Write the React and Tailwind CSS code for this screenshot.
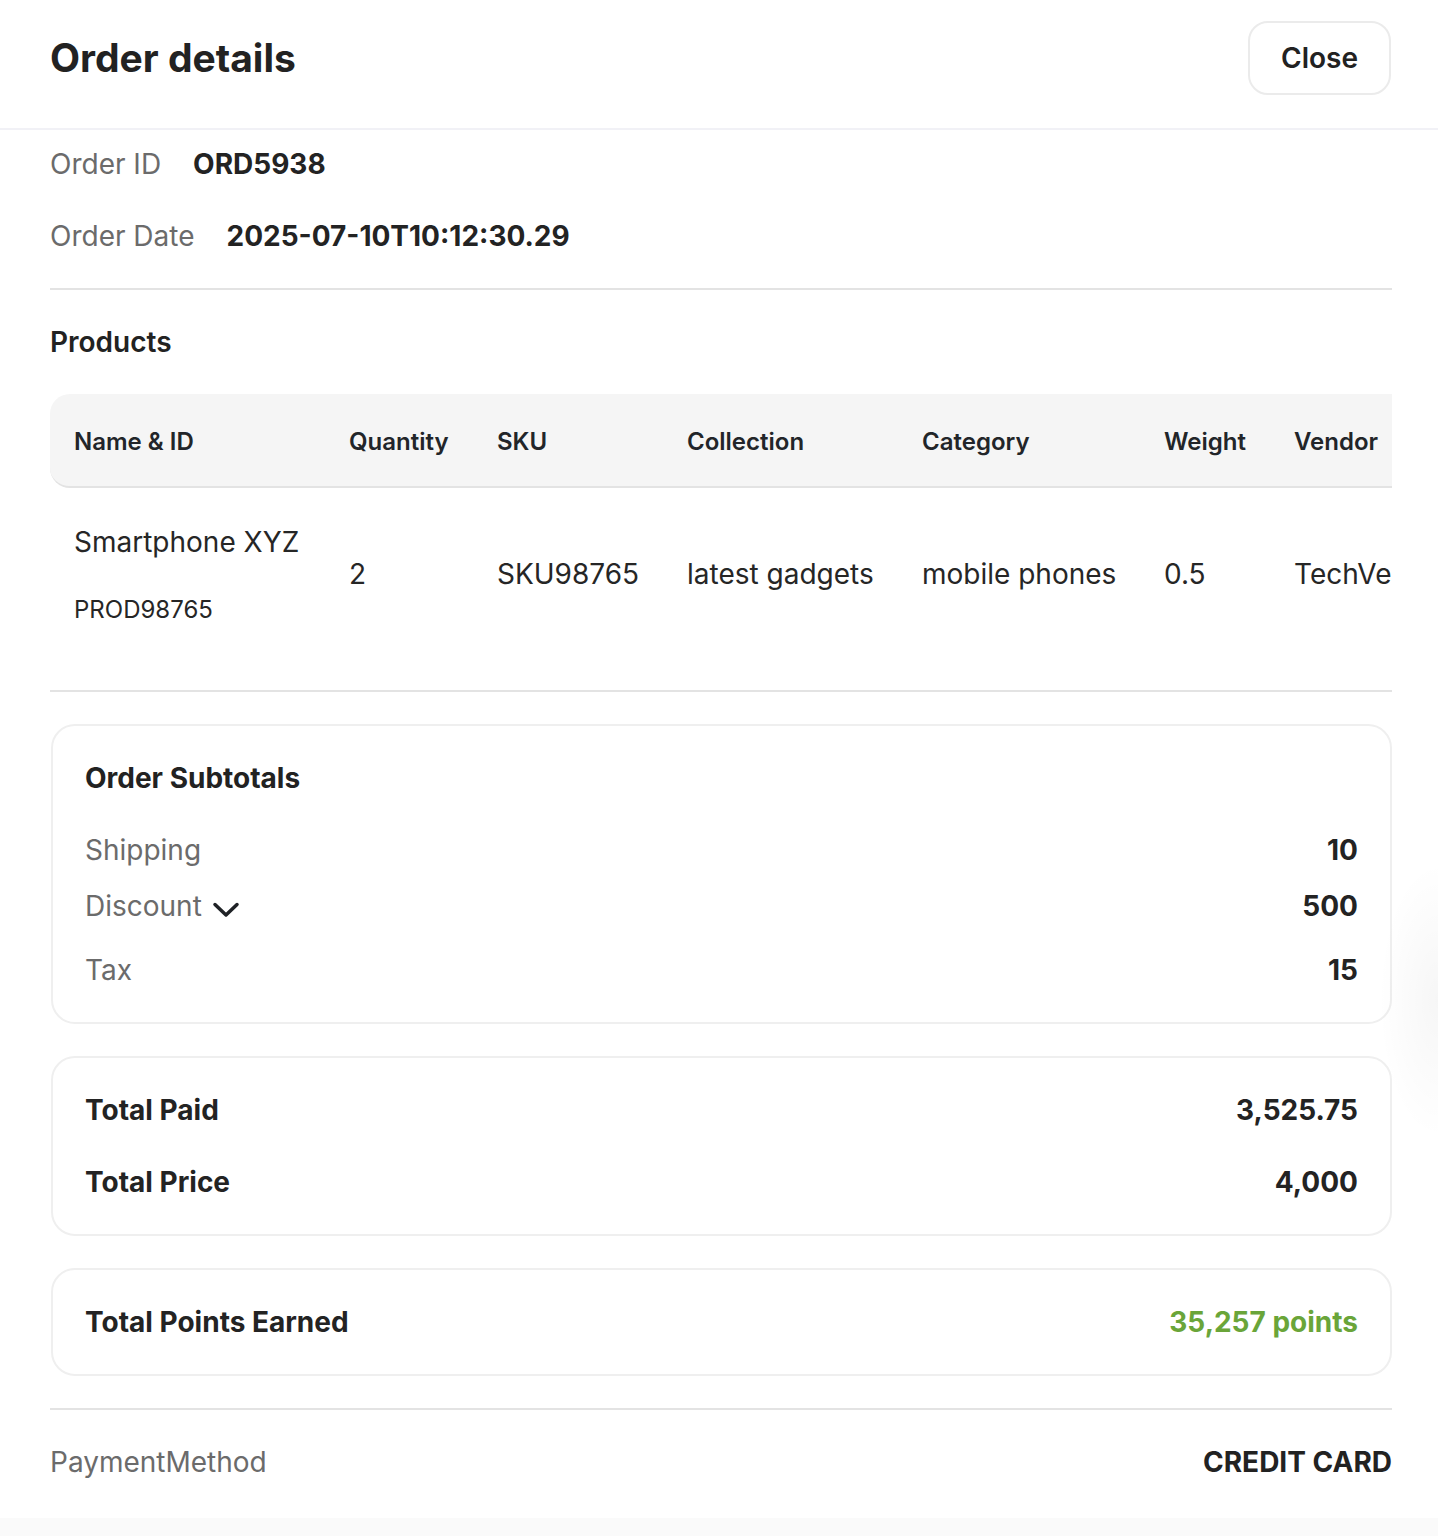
import React from "react";

const columns = [
  { key: "name", label: "Name & ID", width: "w-[275px]" },
  { key: "qty", label: "Quantity", width: "w-[148px]" },
  { key: "sku", label: "SKU", width: "w-[190px]" },
  { key: "collection", label: "Collection", width: "w-[235px]" },
  { key: "category", label: "Category", width: "w-[242px]" },
  { key: "weight", label: "Weight", width: "w-[130px]" },
  { key: "vendor", label: "Vendor", width: "w-[260px]" },
];

const product = {
  name: "Smartphone XYZ",
  id: "PROD98765",
  qty: "2",
  sku: "SKU98765",
  collection: "latest gadgets",
  category: "mobile phones",
  weight: "0.5",
  vendor: "TechVendor Inc.",
};

function ChevronDown() {
  return (
    <svg width="28" height="17" viewBox="0 0 28 17" fill="none" className="ml-[10px] mt-[6px]">
      <path
        d="M3 3.5L14 14L25 3.5"
        stroke="#1f2226"
        strokeWidth="3.5"
        strokeLinecap="round"
        strokeLinejoin="round"
      />
    </svg>
  );
}

function InfoRow({ label, value }) {
  return (
    <div className="flex items-center gap-[32px] h-[40px]">
      <span className="text-[#6b6b6b]">{label}</span>
      <span className="font-bold text-[#232323]">{value}</span>
    </div>
  );
}

export default function App() {
  return (
    <div className="relative min-h-[1536px] bg-[#fafafa] font-['Inter','Noto_Sans',sans-serif] text-[28px] text-[#232323] overflow-hidden">
      <div className="bg-white pb-[36px]">
        {/* Header */}
        <div className="flex items-center justify-between pl-[50px] pr-[47px] pt-[21px] pb-[33px] border-b-2 border-[#f1f1f6]">
          <h1 className="text-[39px] leading-[48px] font-bold text-[#222]">Order details</h1>
          <button className="h-[74px] w-[143px] rounded-[20px] border-2 border-[#ebebeb] bg-white text-[28px] font-semibold text-[#222]">
            Close
          </button>
        </div>

        {/* Body */}
        <div className="pl-[50px] pr-[46px] pt-[14px]">
          <InfoRow label="Order ID" value="ORD5938" />
          <div className="mt-[32px]">
            <InfoRow label="Order Date" value="2025-07-10T10:12:30.29" />
          </div>

          <div className="mt-[32px] h-[2px] bg-[#e3e3e3]" />

          <h2 className="mt-[32px] h-[40px] leading-[40px] font-semibold text-[#222]">Products</h2>

          {/* Products table */}
          <div className="mt-[32px] overflow-hidden">
            <div className="w-max">
              <div className="flex items-center h-[94px] pt-[3px] bg-[#f5f5f5] rounded-l-[20px] border-b-2 border-[#e3e3e3] text-[24px] leading-[32px] font-semibold text-[#222529]">
                {columns.map((c) => (
                  <div key={c.key} className={`${c.width} px-[24px] whitespace-nowrap`}>
                    {c.label}
                  </div>
                ))}
              </div>
              <div className="flex items-center pt-[34px] pb-[31px] whitespace-nowrap text-[#262626]">
                <div className="w-[275px] px-[24px]">
                  <div className="leading-[40px]">{product.name}</div>
                  <div className="mt-[32px] text-[24px] leading-[32px]">{product.id}</div>
                </div>
                <div className="w-[148px] px-[24px] leading-[40px]">{product.qty}</div>
                <div className="w-[190px] px-[24px] leading-[40px]">{product.sku}</div>
                <div className="w-[235px] px-[24px] leading-[40px]">{product.collection}</div>
                <div className="w-[242px] px-[24px] leading-[40px]">{product.category}</div>
                <div className="w-[130px] px-[24px] leading-[40px]">{product.weight}</div>
                <div className="w-[260px] px-[24px] leading-[40px]">{product.vendor}</div>
              </div>
            </div>
          </div>

          <div className="mt-[33px] h-[2px] bg-[#e3e3e3]" />

          {/* Order subtotals */}
          <div className="mt-[32px] ml-px rounded-[24px] border-2 border-[#efefef] p-[32px]">
            <h3 className="leading-[40px] font-bold text-[#222]">Order Subtotals</h3>
            <div className="mt-[32px] flex items-center justify-between h-[40px]">
              <span className="text-[#6b6b6b]">Shipping</span>
              <span className="font-bold">10</span>
            </div>
            <div className="mt-[16px] flex items-center justify-between h-[40px]">
              <span className="flex items-center text-[#6b6b6b]">
                Discount
                <ChevronDown />
              </span>
              <span className="font-bold">500</span>
            </div>
            <div className="mt-[24px] flex items-center justify-between h-[40px]">
              <span className="text-[#6b6b6b]">Tax</span>
              <span className="font-bold">15</span>
            </div>
          </div>

          {/* Totals */}
          <div className="mt-[32px] ml-px rounded-[24px] border-2 border-[#efefef] p-[32px]">
            <div className="flex items-center justify-between h-[40px] font-bold">
              <span>Total Paid</span>
              <span>3,525.75</span>
            </div>
            <div className="mt-[32px] flex items-center justify-between h-[40px] font-bold">
              <span>Total Price</span>
              <span>4,000</span>
            </div>
          </div>

          {/* Points */}
          <div className="mt-[32px] ml-px rounded-[24px] border-2 border-[#efefef] p-[32px]">
            <div className="flex items-center justify-between h-[40px] font-bold">
              <span>Total Points Earned</span>
              <span className="text-[#6aa539]">35,257 points</span>
            </div>
          </div>

          <div className="mt-[32px] h-[2px] bg-[#e3e3e3]" />

          <div className="mt-[32px] flex items-center justify-between h-[40px]">
            <span className="text-[#6b6b6b]">PaymentMethod</span>
            <span className="font-bold text-[#222]">CREDIT CARD</span>
          </div>
        </div>
      </div>

      {/* faint edge shadow */}
      <div className="pointer-events-none absolute right-0 top-[860px] h-[280px] w-[60px] bg-[radial-gradient(ellipse_at_right,rgba(0,0,0,0.035),transparent_70%)]" />
    </div>
  );
}
